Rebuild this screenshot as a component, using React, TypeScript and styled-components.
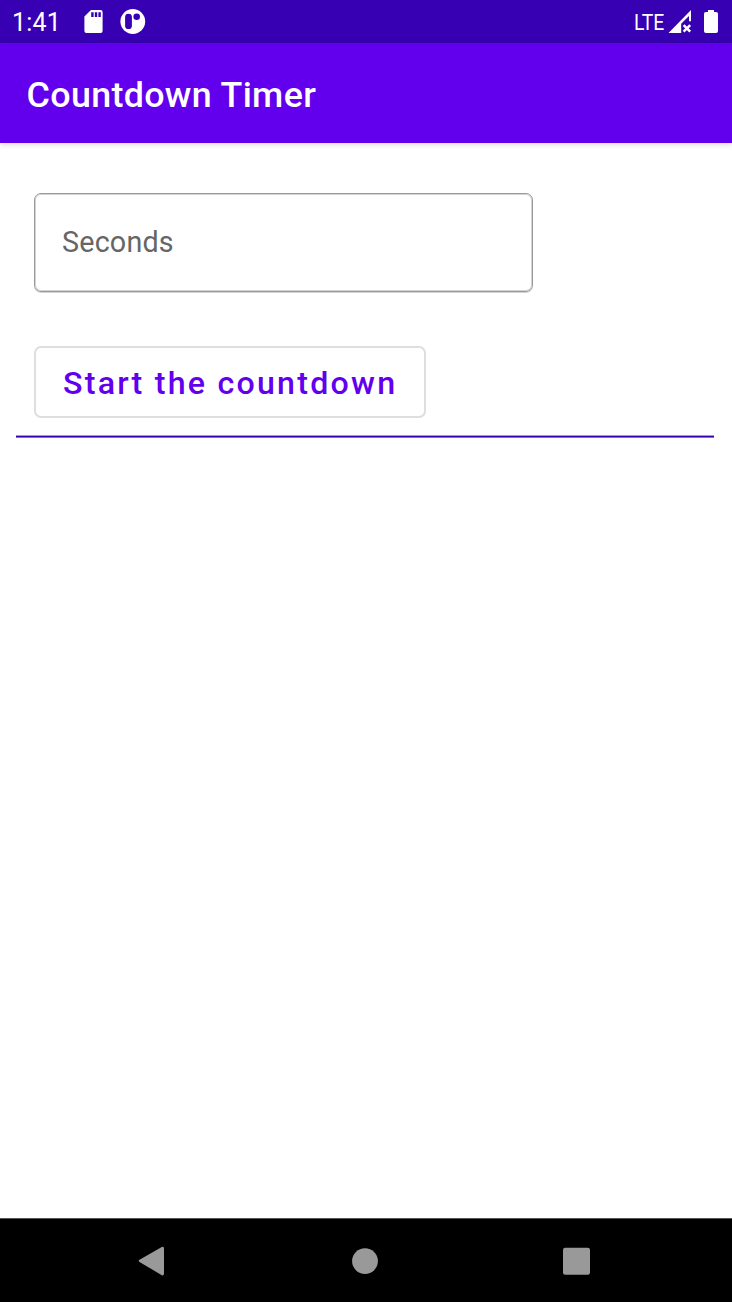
import React from 'react';
import styled, { createGlobalStyle } from 'styled-components';

const GlobalStyle = createGlobalStyle`
  * { box-sizing: border-box; }
  body { margin: 0; background: #fff; font-family: Roboto, sans-serif; }
`;

const Screen = styled.div`
  display: flex;
  flex-direction: column;
  width: 732px;
  height: 1302px;
  overflow: hidden;
  background: #fff;
`;

const StatusBar = styled.header`
  flex: none;
  display: flex;
  justify-content: space-between;
  height: 43px;
  padding: 0 14px 0 12px;
  background: #3700b3;
  color: #fff;
`;

const StatusGroup = styled.div`
  display: flex;
  align-items: center;
  height: 43px;

  svg { display: block; flex: none; }
`;

const Clock = styled.span`
  width: 71px;
  font-size: 25px;
  line-height: 30px;
  padding-top: 3px;
  letter-spacing: 0.2px;
`;

const Network = styled.span`
  font-size: 22.5px;
  line-height: 26px;
  width: 34px;
  transform: scaleX(0.86);
  transform-origin: 0 50%;
`;

const AppBar = styled.div`
  flex: none;
  display: flex;
  align-items: center;
  height: 99.6px;
  padding: 5px 26.5px 0;
  background: #6200ee;
  box-shadow: 0 1px 6px rgba(0, 0, 0, 0.18);
`;

const Title = styled.h1`
  margin: 0;
  font-size: 35.8px;
  line-height: 42px;
  font-weight: 500;
  letter-spacing: 0.35px;
  color: #fff;
`;

const Content = styled.main`
  flex: 1;
  padding: 50px 18px 0 16px;
`;

const SecondsField = styled.div`
  display: flex;
  align-items: center;
  width: 499px;
  height: 99px;
  margin-left: 18px;
  padding: 0 27px;
  border: 1px solid #999;
  border-radius: 7px;
  box-shadow: inset 0 0 0 1px #d4d4d4, 0 1px 0 #d4d4d4;
  font-size: 28.7px;
  letter-spacing: 0.2px;
  color: #666;
`;

const StartButton = styled.button`
  display: flex;
  align-items: center;
  justify-content: flex-start;
  width: 392px;
  height: 72px;
  margin: 54px 0 17px 18px;
  padding: 2px 0 0 27px;
  border: 2px solid #dedede;
  border-radius: 7px;
  background: #fff;
  color: #6200ee;
  font: 500 32.2px Roboto, sans-serif;
  letter-spacing: 2.22px;
  white-space: nowrap;
`;

const Divider = styled.div`
  height: 3px;
  background: linear-gradient(#a994dc 0 1px, #3700b3 1px 2px, #8a68d0 2px 3px);
`;

const NavigationBar = styled.nav`
  flex: none;
  height: 84px;
  border-top: 1px solid #555;
  background: #000;

  svg { display: block; fill: #999; }
`;

export default function App() {
  return (
    <>
      <GlobalStyle />
      <Screen>
        <StatusBar>
          <StatusGroup>
            <Clock>1:41</Clock>
            <svg width="64" height="43" viewBox="0 0 64 43" fill="#fff">
              <path d="M8 10H17.6Q19.6 10 19.6 12V31Q19.6 33 17.6 33H3.4Q1.4 33 1.4 31V16.6Z" />
              <path fill="#3700b3" d="M8.2 12.3h2.4V17H8.2zM11.8 12.3h2.4V17h-2.4zM15.4 12.3h2.4V17h-2.4z" />
              <circle cx="49.8" cy="21.5" r="12.4" />
              <rect x="42.1" y="13.7" width="6.8" height="15.4" rx="3.4" fill="#3700b3" />
              <circle cx="53.7" cy="16.8" r="3.3" fill="#3700b3" />
            </svg>
          </StatusGroup>
          <StatusGroup>
            <Network>LTE</Network>
            <svg width="50" height="43" viewBox="0 0 50 43" fill="#fff">
              <path d="M0.5 33L23 10V21.3H21V16L13.2 23.8V33Z" />
              <path d="M15.6 25.1L22.2 31.7M22.2 25.1L15.6 31.7" stroke="#fff" strokeWidth="2.5" />
              <path d="M40 10h6v2h2.1Q50 12 50 13.8V31.1Q50 33 48.1 33H37.9Q36 33 36 31.1V13.8Q36 12 37.9 12H40Z" />
            </svg>
          </StatusGroup>
        </StatusBar>
        <AppBar>
          <Title>Countdown Timer</Title>
        </AppBar>
        <Content>
          <SecondsField>Seconds</SecondsField>
          <StartButton type="button">Start the countdown</StartButton>
          <Divider />
        </Content>
        <NavigationBar>
          <svg width="732" height="83" viewBox="0 0 732 83">
            <path d="M138.7 41.2Q138.7 42.4 139.5 42.9L161.8 56.2Q164 57 164 54.6V29.3Q164 27 161.8 28L139.5 40.7Z" />
            <circle cx="365" cy="42.1" r="12.9" />
            <rect x="563" y="28.7" width="27" height="27" rx="2.2" />
          </svg>
        </NavigationBar>
      </Screen>
    </>
  );
}
